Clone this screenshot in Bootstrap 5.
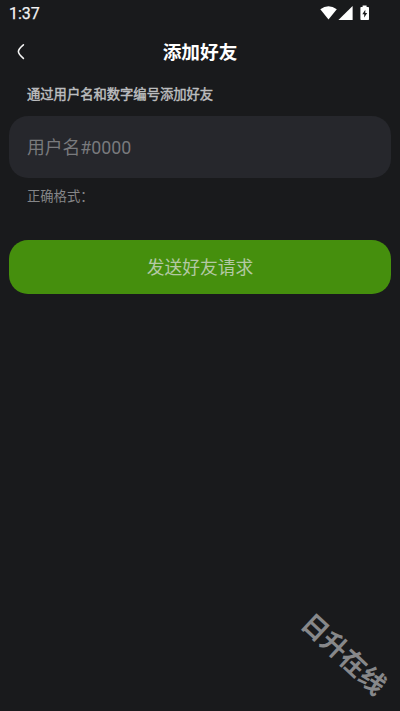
<!DOCTYPE html>
<html lang="zh-CN" data-bs-theme="dark">
<head>
<meta charset="utf-8">
<meta name="viewport" content="width=device-width, initial-scale=1">
<title>添加好友</title>
<link href="https://cdn.jsdelivr.net/npm/bootstrap@5.3.0/dist/css/bootstrap.min.css" rel="stylesheet">
<style>
body{background:#191a1c;font-family:"Noto Sans CJK SC",sans-serif;height:711px;overflow:hidden}
.status{height:27px;padding:1px 30px 0 9px;font:400 16px/25px Roboto,sans-serif;color:#f4f4f4;-webkit-text-stroke:.25px #f4f4f4}
.topbar{height:50px;padding:0 16px}
.topbar h1{font-size:18.7px;line-height:28px;font-weight:700;color:#fff;padding-bottom:2px}
.side{width:12px}
.form-area{padding:7px 9px 0}
.lbl{font-size:13.3px;line-height:20px;font-weight:400;-webkit-text-stroke:.45px #bcbdbf;color:#bcbdbf;padding-left:18px;margin-bottom:12px}
.name-input.form-control,.name-input.form-control:focus{height:62px;background:#26272c;border:0;border-radius:19px;padding:1px 18px 0;font-family:Roboto,"Noto Sans CJK SC",sans-serif;font-size:17.8px;box-shadow:none}
.name-input.form-control::placeholder{color:#797a7d;opacity:1}
.hint{font-size:13.3px;line-height:20px;color:#858688;padding-left:18px;margin:8px 0 34px}
.send.btn{height:54px;background:#458f0d;border:0;border-radius:19px;color:#b3c9a4;font-size:17.8px;padding:0 0 1px}
.wmark{left:291px;top:634px;width:108px;font-size:26px;line-height:38px;font-weight:700;color:#87888a;transform:rotate(43deg)}
</style>
<script src="https://cdn.jsdelivr.net/npm/bootstrap@5.3.0/dist/js/bootstrap.bundle.min.js"></script>
</head>
<body class="position-relative">
<div class="status d-flex justify-content-between align-items-start">
  <span>1:37</span>
  <svg width="50" height="25" viewBox="320 1 50 25" fill="#fff">
    <path d="M320.3 9.2Q328.5 3.4 336.8 9.2L328.5 19.4Z"/>
    <path d="M352.6 6V20H338.4Z"/>
    <path fill-rule="evenodd" d="M362.6 5.4H366.6V7H368.2Q369 7 369 7.8V19.2Q369 20 368.2 20H361.2Q360.4 20 360.4 19.2V7.8Q360.4 7 361.2 7H362.6ZM365.3 9.8L362.3 14.3H364.2V17.6L367.2 13H365.3Z"/>
  </svg>
</div>
<header class="topbar d-flex align-items-center justify-content-between">
  <svg class="side" height="18" viewBox="0 0 12 18" fill="none" stroke="#f5f5f5" stroke-width="1.6" stroke-linecap="round"><path d="M7.4 1.8C4.4 4.3 2.4 6.2 2.4 8.6S4.4 12.9 7.4 15.4"/></svg>
  <h1 class="m-0">添加好友</h1>
  <span class="side"></span>
</header>
<main class="form-area">
  <label for="username" class="lbl d-block">通过用户名和数字编号添加好友</label>
  <input id="username" class="form-control name-input" type="text" placeholder="用户名#0000">
  <p class="hint">正确格式：</p>
  <button class="btn send w-100" type="button">发送好友请求</button>
</main>
<div class="wmark position-absolute text-center text-nowrap">日升在线</div>
</body>
</html>
